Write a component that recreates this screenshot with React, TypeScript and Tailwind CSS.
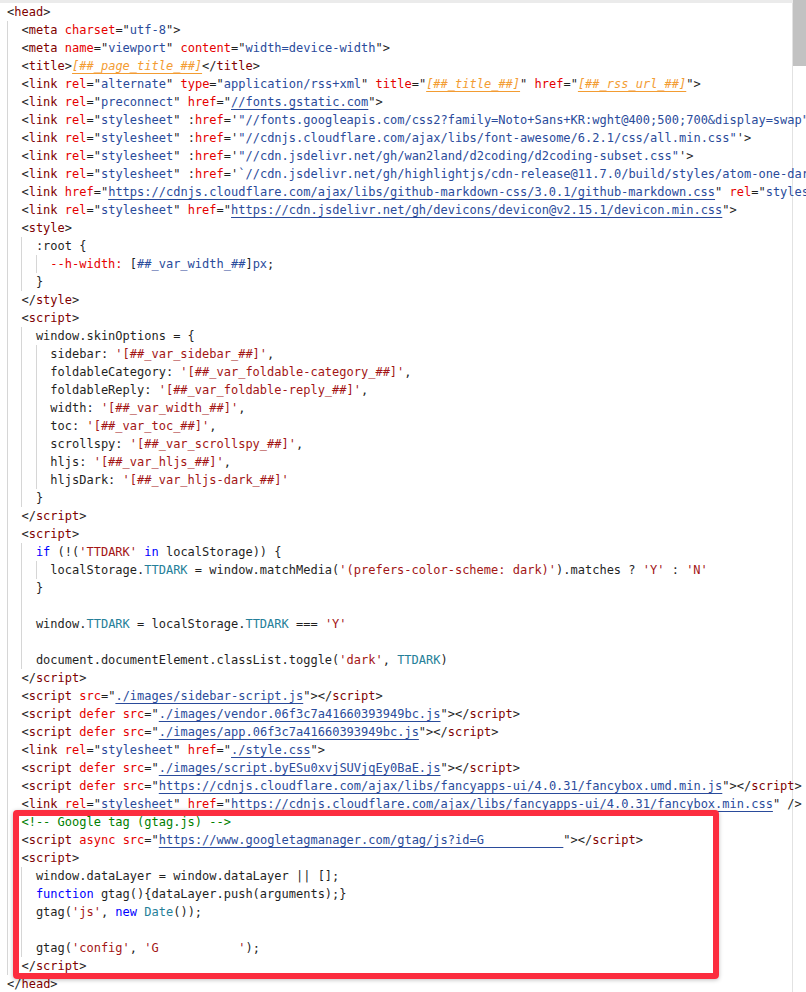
import React from "react";

type Tok = [string, string];

const CLS: Record<string, string> = {
  p: "text-[#1f1f1f]",
  t: "text-[#800000]",
  a: "text-[#e50000]",
  v: "text-[#2a4b9b]",
  u: "text-[#2a4b9b] underline decoration-[#2a4b9b] underline-offset-[3px]",
  o: "text-[#f39c32] italic underline decoration-[#f39c32] underline-offset-[3px]",
  s: "text-[#a31515]",
  k: "text-[#0000ff]",
  c: "text-[#267f99]",
  g: "text-[#008000]",
};

const open = (name: string): Tok[] => [["p", "<"], ["t", name]];
const close = (name: string): Tok[] => [["p", "</"], ["t", name], ["p", ">"]];
const attr = (name: string, val: string, kind = "v"): Tok[] => [
  ["p", " "],
  ["a", name],
  ["p", '="'],
  [kind, val],
  ["p", '"'],
];
const bound = (val: string, q: string): Tok[] => [
  ["p", " :"],
  ["a", "href"],
  ["p", "='"],
  ["v", q + val + q],
  ["p", "'>"],
];

type Line = { i: number; t: Tok[] };

const L = (i: number, ...parts: Tok[][]): Line => ({ i, t: parts.flat() });

const lines: Line[] = [
  L(0, open("head"), [["p", ">"]]),
  L(1, open("meta"), attr("charset", "utf-8"), [["p", ">"]]),
  L(1, open("meta"), attr("name", "viewport"), attr("content", "width=device-width"), [["p", ">"]]),
  L(1, open("title"), [["p", ">"], ["o", "[##_page_title_##]"]], close("title")),
  L(
    1,
    open("link"),
    attr("rel", "alternate"),
    attr("type", "application/rss+xml"),
    attr("title", "[##_title_##]", "o"),
    attr("href", "[##_rss_url_##]", "o"),
    [["p", ">"]]
  ),
  L(1, open("link"), attr("rel", "preconnect"), attr("href", "//fonts.gstatic.com", "u"), [["p", ">"]]),
  L(
    1,
    open("link"),
    attr("rel", "stylesheet"),
    bound("//fonts.googleapis.com/css2?family=Noto+Sans+KR:wght@400;500;700&display=swap", '"')
  ),
  L(
    1,
    open("link"),
    attr("rel", "stylesheet"),
    bound("//cdnjs.cloudflare.com/ajax/libs/font-awesome/6.2.1/css/all.min.css", '"')
  ),
  L(
    1,
    open("link"),
    attr("rel", "stylesheet"),
    bound("//cdn.jsdelivr.net/gh/wan2land/d2coding/d2coding-subset.css", '"')
  ),
  L(
    1,
    open("link"),
    attr("rel", "stylesheet"),
    bound("//cdn.jsdelivr.net/gh/highlightjs/cdn-release@11.7.0/build/styles/atom-one-dark.min.css", "`")
  ),
  L(
    1,
    open("link"),
    attr("href", "https://cdnjs.cloudflare.com/ajax/libs/github-markdown-css/3.0.1/github-markdown.css", "u"),
    attr("rel", "stylesheet"),
    [["p", ">"]]
  ),
  L(
    1,
    open("link"),
    attr("rel", "stylesheet"),
    attr("href", "https://cdn.jsdelivr.net/gh/devicons/devicon@v2.15.1/devicon.min.css", "u"),
    [["p", ">"]]
  ),
  L(1, open("style"), [["p", ">"]]),
  L(2, [["p", ":root {"]]),
  L(3, [
    ["a", "--h-width:"],
    ["p", " ["],
    ["v", "##_var_width_##"],
    ["p", "]"],
    ["v", "px"],
    ["p", ";"],
  ]),
  L(2, [["p", "}"]]),
  L(1, close("style")),
  L(1, open("script"), [["p", ">"]]),
  L(2, [["p", "window.skinOptions = {"]]),
  L(3, [["p", "sidebar: "], ["s", "'[##_var_sidebar_##]'"], ["p", ","]]),
  L(3, [["p", "foldableCategory: "], ["s", "'[##_var_foldable-category_##]'"], ["p", ","]]),
  L(3, [["p", "foldableReply: "], ["s", "'[##_var_foldable-reply_##]'"], ["p", ","]]),
  L(3, [["p", "width: "], ["s", "'[##_var_width_##]'"], ["p", ","]]),
  L(3, [["p", "toc: "], ["s", "'[##_var_toc_##]'"], ["p", ","]]),
  L(3, [["p", "scrollspy: "], ["s", "'[##_var_scrollspy_##]'"], ["p", ","]]),
  L(3, [["p", "hljs: "], ["s", "'[##_var_hljs_##]'"], ["p", ","]]),
  L(3, [["p", "hljsDark: "], ["s", "'[##_var_hljs-dark_##]'"]]),
  L(2, [["p", "}"]]),
  L(1, close("script")),
  L(1, open("script"), [["p", ">"]]),
  L(2, [
    ["k", "if"],
    ["p", " (!("],
    ["s", "'TTDARK'"],
    ["p", " "],
    ["k", "in"],
    ["p", " localStorage)) {"],
  ]),
  L(3, [
    ["p", "localStorage."],
    ["c", "TTDARK"],
    ["p", " = window.matchMedia("],
    ["s", "'(prefers-color-scheme: dark)'"],
    ["p", ").matches ? "],
    ["s", "'Y'"],
    ["p", " : "],
    ["s", "'N'"],
  ]),
  L(2, [["p", "}"]]),
  L(2, []),
  L(2, [
    ["p", "window."],
    ["c", "TTDARK"],
    ["p", " = localStorage."],
    ["c", "TTDARK"],
    ["p", " === "],
    ["s", "'Y'"],
  ]),
  L(2, []),
  L(2, [
    ["p", "document.documentElement.classList.toggle("],
    ["s", "'dark'"],
    ["p", ", "],
    ["c", "TTDARK"],
    ["p", ")"],
  ]),
  L(1, close("script")),
  L(1, open("script"), attr("src", "./images/sidebar-script.js", "u"), [["p", ">"]], close("script")),
  L(
    1,
    open("script"),
    [["p", " "], ["a", "defer"]],
    attr("src", "./images/vendor.06f3c7a41660393949bc.js", "u"),
    [["p", ">"]],
    close("script")
  ),
  L(
    1,
    open("script"),
    [["p", " "], ["a", "defer"]],
    attr("src", "./images/app.06f3c7a41660393949bc.js", "u"),
    [["p", ">"]],
    close("script")
  ),
  L(1, open("link"), attr("rel", "stylesheet"), attr("href", "./style.css", "u"), [["p", ">"]]),
  L(
    1,
    open("script"),
    [["p", " "], ["a", "defer"]],
    attr("src", "./images/script.byESu0xvjSUVjqEy0BaE.js", "u"),
    [["p", ">"]],
    close("script")
  ),
  L(
    1,
    open("script"),
    [["p", " "], ["a", "defer"]],
    attr("src", "https://cdnjs.cloudflare.com/ajax/libs/fancyapps-ui/4.0.31/fancybox.umd.min.js", "u"),
    [["p", ">"]],
    close("script")
  ),
  L(
    1,
    open("link"),
    attr("rel", "stylesheet"),
    attr("href", "https://cdnjs.cloudflare.com/ajax/libs/fancyapps-ui/4.0.31/fancybox.min.css", "u"),
    [["p", " />"]]
  ),
  L(1, [["g", "<!-- Google tag (gtag.js) -->"]]),
  L(
    1,
    open("script"),
    [["p", " "], ["a", "async"]],
    attr("src", "https://www.googletagmanager.com/gtag/js?id=G           ", "u"),
    [["p", ">"]],
    close("script")
  ),
  L(1, open("script"), [["p", ">"]]),
  L(2, [["p", "window.dataLayer = window.dataLayer || [];"]]),
  L(2, [["k", "function"], ["p", " gtag(){dataLayer.push(arguments);}"]]),
  L(2, [["p", "gtag("], ["s", "'js'"], ["p", ", "], ["k", "new"], ["p", " "], ["c", "Date"], ["p", "());"]]),
  L(2, []),
  L(2, [["p", "gtag("], ["s", "'config'"], ["p", ", "], ["s", "'G           '"], ["p", ");"]]),
  L(1, close("script")),
  L(0, close("head")),
];

function CodeLine({ line }: { line: Line }) {
  const guides = [];
  for (let g = 0; g < line.i; g++) {
    guides.push(
      <span
        key={g}
        className="w-[2ch] shrink-0 self-stretch border-l border-[#d6d6d6]"
      />
    );
  }
  return (
    <div className="flex h-[18px] whitespace-pre leading-[18px]">
      {guides}
      <span className="shrink-0">
        {line.t.map(([k, txt], idx) => (
          <span key={idx} className={CLS[k]}>
            {txt}
          </span>
        ))}
      </span>
    </div>
  );
}

export default function App() {
  return (
    <div className="relative h-[992px] w-[806px] overflow-hidden bg-white font-['DejaVu_Sans_Mono',monospace] text-[12px] text-[#1f1f1f]">
      <div className="absolute bottom-0 left-[792px] top-0 w-px bg-[#e2e2e2]" />
      <div className="relative h-[3px] w-full bg-[#ebebeb]" />
      <div className="relative pl-[7px]">
        {lines.map((ln, idx) => (
          <CodeLine key={idx} line={ln} />
        ))}
      </div>
      <div className="absolute right-0 top-0 h-[66px] w-[13px] bg-[#c2c2c2]" />
      <div className="absolute left-[13px] top-[810px] h-[169px] w-[706px] rounded-[4px] border-[6px] border-[#fc2d3f] shadow-[0_1px_4px_rgba(0,0,0,0.25)]" />
    </div>
  );
}
